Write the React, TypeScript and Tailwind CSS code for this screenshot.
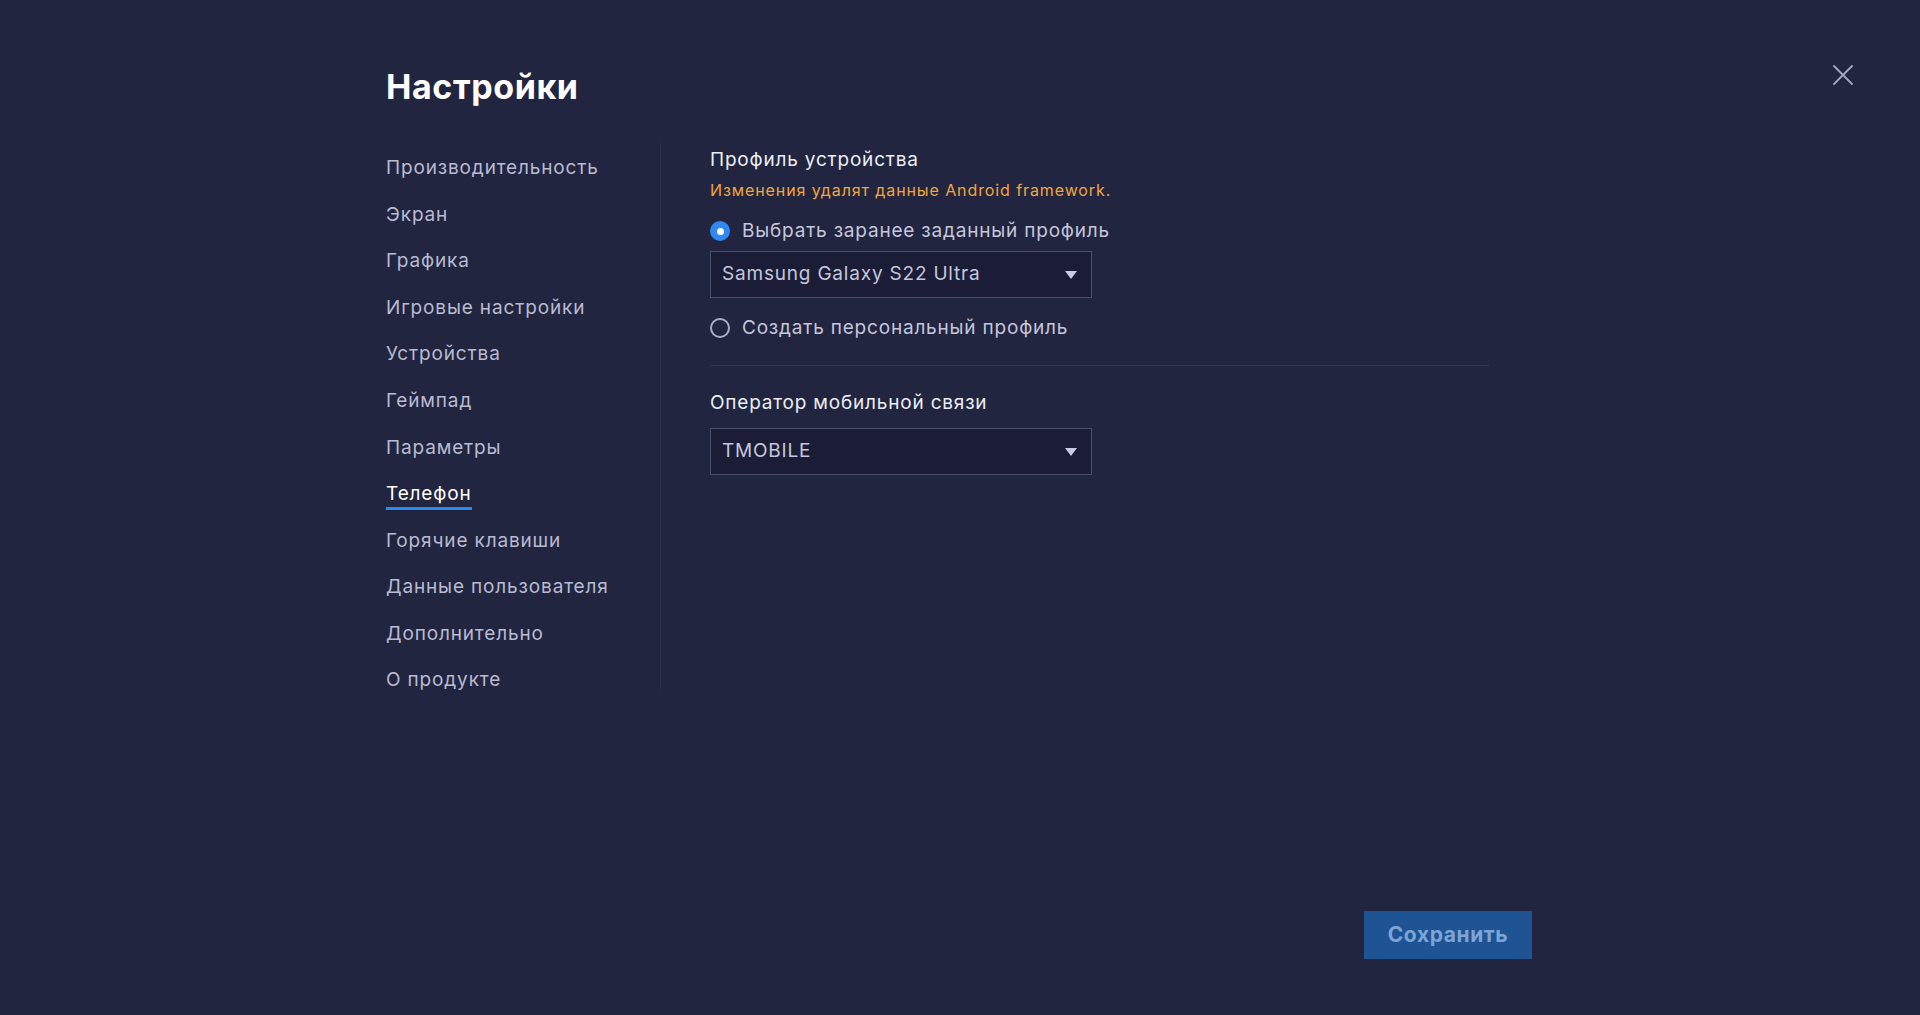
import React from "react";

const navItems = [
  "Производительность",
  "Экран",
  "Графика",
  "Игровые настройки",
  "Устройства",
  "Геймпад",
  "Параметры",
  "Телефон",
  "Горячие клавиши",
  "Данные пользователя",
  "Дополнительно",
  "О продукте",
];

function Caret() {
  return (
    <svg width="12" height="8" viewBox="0 0 12 8" className="shrink-0">
      <path d="M0 0 H12 L6 8 Z" fill="#c9cce0" />
    </svg>
  );
}

function Select({ value }: { value: string }) {
  return (
    <div className="flex h-[47px] w-[382px] items-center justify-between border border-[#4b4f6e] bg-[#1b1d36] pl-[11px] pr-[14px] text-[19px] tracking-[0.8px] text-[#c4c7dc]">
      <span>{value}</span>
      <Caret />
    </div>
  );
}

export default function App() {
  return (
    <div
      className="relative flex h-[1015px] w-[1920px] flex-col bg-[#22253f] pl-[386px] pr-[388px]"
      style={{ fontFamily: "Inter, 'Noto Sans', sans-serif" }}
    >
      <button className="absolute right-[66px] top-[64px] flex h-[22px] w-[22px] items-center justify-center">
        <svg width="22" height="22" viewBox="0 0 22 22">
          <path d="M2 2 L20 20 M20 2 L2 20" stroke="#a3a7c2" strokeWidth="1.8" strokeLinecap="round" />
        </svg>
      </button>

      <h1 className="mt-[67px] text-[34px] font-bold leading-[40px] tracking-[0.6px] text-white">Настройки</h1>

      <div className="mt-[38px] flex">
        <nav className="flex w-[274px] flex-col">
          {navItems.map((item) => {
            const active = item === "Телефон";
            return (
              <div key={item} className="flex h-[46.55px] items-center">
                <span
                  className={
                    active
                      ? "relative text-[19px] leading-[24px] tracking-[0.85px] text-white after:absolute after:left-0 after:right-0 after:top-[25px] after:h-[3px] after:bg-[#2b8cf0] after:content-['']"
                      : "text-[19px] leading-[24px] tracking-[0.85px] text-[#b8bbd2]"
                  }
                >
                  {item}
                </span>
              </div>
            );
          })}
        </nav>
        <div className="mt-[-2px] h-[546px] w-px bg-[#2b2f4d]" />
        <div className="flex w-[828px] flex-col pl-[49px]">
          <div className="mt-[3px] text-[19px] leading-[24px] tracking-[0.8px] text-[#eceef8]">Профиль устройства</div>
          <div className="mt-[8px] text-[16px] leading-[20px] tracking-[0.9px] text-[#f0a640]">
            Изменения удалят данные Android framework.
          </div>
          <div className="mt-[19px] flex h-[24px] items-center gap-[12px]">
            <span className="flex h-[20px] w-[20px] items-center justify-center rounded-full bg-[#2e8af2]">
              <span className="h-[7px] w-[7px] rounded-full bg-white" />
            </span>
            <span className="text-[19px] leading-[24px] tracking-[0.8px] text-[#c4c7dc]">
              Выбрать заранее заданный профиль
            </span>
          </div>
          <div className="mt-[8px]">
            <Select value="Samsung Galaxy S22 Ultra" />
          </div>
          <div className="mt-[18px] flex h-[24px] items-center gap-[12px]">
            <span className="h-[20px] w-[20px] rounded-full border-2 border-[#a9adc5]" />
            <span className="text-[19px] leading-[24px] tracking-[0.8px] text-[#c4c7dc]">
              Создать персональный профиль
            </span>
          </div>
          <div className="mt-[25px] h-px w-full bg-[#33375a]" />
          <div className="mt-[25px] text-[19px] leading-[24px] tracking-[0.8px] text-[#eceef8]">
            Оператор мобильной связи
          </div>
          <div className="mt-[13px]">
            <Select value="TMOBILE" />
          </div>
        </div>
      </div>

      <div className="mt-auto flex justify-end pb-[56px]">
        <button className="flex h-[48px] w-[168px] items-center justify-center bg-[#1e5494] text-[21px] font-bold tracking-[0.6px] text-[#7ca4d5]">
          Сохранить
        </button>
      </div>
    </div>
  );
}
